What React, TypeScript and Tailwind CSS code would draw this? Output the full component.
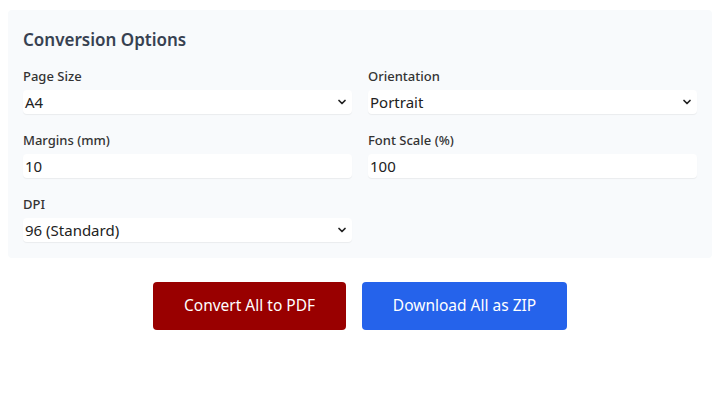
import { ChevronDown } from "lucide-react";

function SelectBox({ value }: { value: string }) {
	return (
		<div className="flex items-center justify-between h-[24px] bg-white rounded-[4px] shadow-[0_1px_1px_rgba(0,0,0,0.06)] pl-[2px] pr-[4px]">
			<span className="text-[15px] text-[#222]">{value}</span>
			<ChevronDown size={12} strokeWidth={3.5} className="text-[#222]" />
		</div>
	);
}

function InputBox({ value }: { value: string }) {
	return (
		<div className="flex items-center h-[24px] bg-white rounded-[4px] shadow-[0_1px_1px_rgba(0,0,0,0.06)] pl-[2px]">
			<span className="text-[15px] text-[#222]">{value}</span>
		</div>
	);
}

function Field({ label, children }: { label: string; children: React.ReactNode }) {
	return (
		<div className="flex flex-col gap-[5px]">
			<label className="text-[13px] font-medium text-[#333] leading-[18px]">{label}</label>
			{children}
		</div>
	);
}

export default function App() {
	return (
		<div className="w-[728px] h-[410px] bg-white pt-[10px] px-[8px]" style={{ fontFamily: '"Noto Sans", "Open Sans", sans-serif' }}>
			<div className="bg-[#f8fafc] rounded-[4px] w-[704px] h-[248px] px-[15px] pt-[19px]">
				<h2 className="text-[17px] font-semibold text-[#374151] leading-[22px] mb-[16px]">Conversion Options</h2>
				<div className="grid grid-cols-2 gap-x-[16px] gap-y-[17px] w-[674px]">
					<Field label="Page Size">
						<SelectBox value="A4" />
					</Field>
					<Field label="Orientation">
						<SelectBox value="Portrait" />
					</Field>
					<Field label="Margins (mm)">
						<InputBox value="10" />
					</Field>
					<Field label="Font Scale (%)">
						<InputBox value="100" />
					</Field>
					<Field label="DPI">
						<SelectBox value="96 (Standard)" />
					</Field>
				</div>
			</div>
			<div className="flex justify-center gap-[16px] w-[704px] mt-[24px]">
				<button className="w-[193px] h-[48px] bg-[#990000] text-white text-[15.5px] rounded-[4px]">Convert All to PDF</button>
				<button className="w-[205px] h-[48px] bg-[#2563eb] text-white text-[15.5px] rounded-[4px]">Download All as ZIP</button>
			</div>
		</div>
	);
}
